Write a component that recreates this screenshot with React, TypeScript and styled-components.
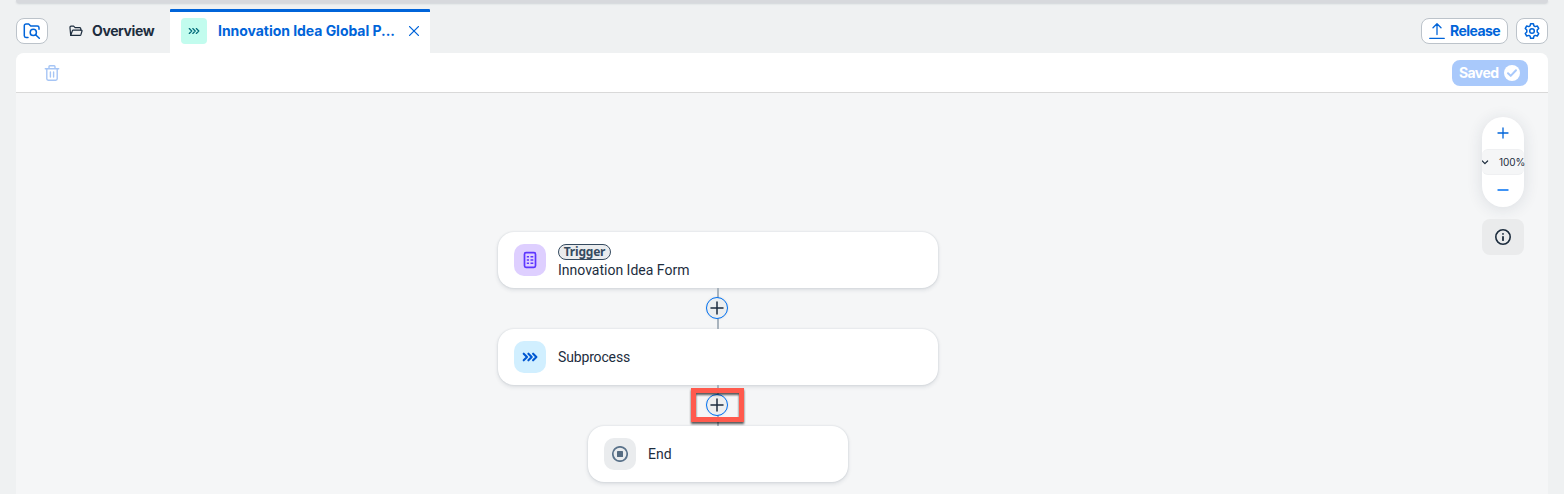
import React from "react";
import styled, { createGlobalStyle } from "styled-components";

const Global = createGlobalStyle`
  * { box-sizing: border-box; }
  html, body, #root { height: 100%; }
  body {
    margin: 0;
    overflow: hidden;
    background: #eff1f2;
    color: #1d2d3e;
    font-family: Roboto, "Noto Sans", sans-serif;
    font-size: 14px;
  }
`;

const Page = styled.div`
  height: 494px;
  padding: 0 16px;
  display: flex;
  flex-direction: column;
`;

const Shell = styled.div`
  height: 3px;
  flex: none;
  background: #d7d9dd;
  border-radius: 0 0 8px 8px;
  box-shadow: 0 1px 2px rgba(85, 95, 110, 0.2);
`;

const TabBar = styled.div`
  height: 50px;
  flex: none;
  display: flex;
  padding-top: 6px;
`;

const OutlineButton = styled.button<{ $width: number }>`
  width: ${(p) => p.$width}px;
  height: 26px;
  margin: 9px 0 0;
  padding: 0;
  display: flex;
  align-items: center;
  justify-content: center;
  gap: 5px;
  flex: none;
  border: 1px solid #bcc3ca;
  border-radius: 8px;
  background: #fff;
  color: #0064d9;
  font: inherit;
`;

const OverviewTab = styled.div`
  width: 122px;
  height: 44px;
  padding-left: 21px;
  display: flex;
  align-items: center;
  gap: 9px;
`;

const ActiveTab = styled.div`
  width: 260px;
  height: 44px;
  padding: 0 0 3px 11px;
  display: flex;
  align-items: center;
  border-top: 3px solid #0064d9;
  border-radius: 1px 1px 0 0;
  background: #fff;
  color: #0064d9;
`;

const ProcessBadge = styled.span`
  width: 26px;
  height: 26px;
  margin-right: 11px;
  display: flex;
  align-items: center;
  justify-content: center;
  border-radius: 4px;
  background: #c2fcee;
`;

const Label = styled.span<{ $width: number; $bold?: boolean; $spacing?: number }>`
  display: block;
  width: ${(p) => p.$width}px;
  font-family: ${(p) => (p.$bold ? 'Inter, "Noto Sans", sans-serif' : "inherit")};
  line-height: 18px;
  font-weight: ${(p) => (p.$bold ? 700 : 400)};
  letter-spacing: ${(p) => p.$spacing ?? 0}px;
  white-space: nowrap;
  text-align: left;
`;

const Actions = styled.div`
  margin-left: auto;
  display: flex;
  gap: 8px;
`;

const Panel = styled.main`
  flex: 1;
  display: flex;
  flex-direction: column;
  overflow: hidden;
  border-radius: 8px 8px 0 0;
  background: #f5f6f7;
`;

const Toolbar = styled.div`
  height: 40px;
  flex: none;
  padding: 0 20px 0 28px;
  display: flex;
  align-items: center;
  justify-content: space-between;
  background: #fff;
  border-bottom: 1px solid #d9d9d9;
`;

const Saved = styled.div`
  width: 76px;
  height: 26px;
  margin-top: 1px;
  padding-left: 7px;
  display: flex;
  align-items: center;
  border-radius: 8px;
  background: #a9c9fb;
  color: #fff;
`;

const Canvas = styled.section`
  flex: 1;
  display: flex;
  justify-content: space-between;
  padding: 0 24px 0 482px;
`;

const Flow = styled.div`
  width: 440px;
  padding-top: 139px;
  display: flex;
  flex-direction: column;
  align-items: center;
`;

const Card = styled.div<{ $width: number }>`
  width: ${(p) => p.$width}px;
  height: 56px;
  flex: none;
  padding: 0 16px;
  display: flex;
  align-items: center;
  gap: 12px;
  border-radius: 16px;
  background: #fff;
  box-shadow: 0 0 2px rgba(34, 53, 72, 0.16), 0 2px 4px rgba(34, 53, 72, 0.12);
`;

const CardIcon = styled.span<{ $bg: string }>`
  width: 32px;
  height: 32px;
  flex: none;
  display: flex;
  align-items: center;
  justify-content: center;
  border-radius: 10px;
  background: ${(p) => p.$bg};
`;

const Stack = styled.div`
  padding-top: 2px;
  display: flex;
  flex-direction: column;
  align-items: flex-start;
`;

const Pill = styled.span`
  width: 53px;
  height: 16px;
  margin-bottom: 1px;
  display: flex;
  align-items: center;
  justify-content: center;
  border: 1px solid #354a5f;
  border-radius: 8px;
  background: #eaecee;
  color: #354a5f;
  font-family: "Noto Sans", sans-serif;
  font-size: 12px;
  line-height: 14px;
  font-weight: 700;
  letter-spacing: -0.2px;
`;

const Connector = styled.div`
  position: relative;
  width: 54px;
  height: 41px;
  flex: none;
  display: flex;
  justify-content: center;
  background: linear-gradient(#a9b4be, #a9b4be) 26px 0 / 2px 100% no-repeat;
`;

const AddButton = styled.button`
  width: 22px;
  height: 22px;
  margin: 9px 2px 0 0;
  padding: 0;
  display: flex;
  align-items: center;
  justify-content: center;
  border: 1px solid #0070f2;
  border-radius: 50%;
  background: #edeff0;
  box-shadow: 0 0 2px rgba(34, 53, 72, 0.15);
`;

const Highlight = styled.div`
  position: absolute;
  left: 0;
  top: 3px;
  width: 53px;
  height: 34px;
  border: 5px solid #ff5a4d;
  filter: drop-shadow(0 2px 1px rgba(0, 0, 0, 0.65));
`;

const Controls = styled.aside`
  width: 42px;
  padding-top: 24px;
  display: flex;
  flex-direction: column;
  gap: 12px;
`;

const ZoomBox = styled.div`
  height: 90px;
  display: flex;
  flex-direction: column;
  border-radius: 21px;
  background: #fff;
  box-shadow: 0 2px 16px rgba(34, 53, 72, 0.12);
`;

const ZoomButton = styled.button<{ $height: number }>`
  height: ${(p) => p.$height}px;
  padding: 0;
  display: flex;
  align-items: center;
  justify-content: center;
  border: 0;
  background: none;
`;

const ZoomLevel = styled.div`
  height: 26px;
  flex: none;
  display: flex;
  align-items: center;
  gap: 10px;
  border: 1px solid #eff0f2;
  border-width: 1px 0;
  border-radius: 6px;
  background: #f5f6f7;
  font-family: Inter, Arial, sans-serif;
  font-size: 10px;
  letter-spacing: -0.1px;
`;

const InfoButton = styled.button`
  height: 36px;
  padding: 0;
  display: flex;
  align-items: center;
  justify-content: center;
  border: 0;
  border-radius: 8px;
  background: #eaebec;
`;

const Svg = styled.svg`
  display: block;
  flex: none;
  fill: none;
  stroke-linecap: round;
  stroke-linejoin: round;
`;

const Chevrons = ({ color, size, width }: { color: string; size: number; width: number }) => (
  <Svg width={size} height={size} viewBox="0 0 16 16" stroke={color} strokeWidth={width}>
    <path d="M1.7 4.7 5 8l-3.3 3.3M6.4 4.7 9.7 8l-3.3 3.3M11.1 4.7 14.4 8l-3.3 3.3" />
  </Svg>
);

const Plus = ({ color, size, width }: { color: string; size: number; width: number }) => (
  <Svg width={size} height={size} viewBox={`0 0 ${size} ${size}`} stroke={color} strokeWidth={width}>
    <path d={`M${size / 2} 1v${size - 2}M1 ${size / 2}h${size - 2}`} />
  </Svg>
);

export default function App() {
  return (
    <>
      <Global />
      <Page>
        <Shell />
        <TabBar>
          <OutlineButton $width={32} aria-label="Search folder">
            <Svg width="18" height="18" viewBox="0 0 18 18" stroke="#0064d9" strokeWidth="1.5">
              <path d="M5 15.500H3A1.700 1.700 0 0 1 1.300 13.800V3.700A1.700 1.700 0 0 1 3 2h2.700l2 2h6.600A1.700 1.700 0 0 1 16 5.700v1.600" />
              <circle cx="10.300" cy="10.400" r="3.100" />
              <path d="m12.600 12.700 3.700 3.500" />
            </Svg>
          </OutlineButton>
          <OverviewTab>
            <Svg width="14" height="12" viewBox="0 0 14 12" stroke="#1d2d3e" strokeWidth="1.200">
              <path d="M1.700 10.300 1 3V2.200a1 1 0 0 1 1-1h2.600l1.500 1.500h4.700a1 1 0 0 1 1 1v1.400" />
              <path d="M1.700 10.300 3.400 5.700a.9.900 0 0 1 .8-.5h8.200a.6.600 0 0 1 .6.800l-1.100 3.700a.9.900 0 0 1-.9.600Z" />
            </Svg>
            <Label $width={64} $bold $spacing={-0.4}>Overview</Label>
          </OverviewTab>
          <ActiveTab>
            <ProcessBadge>
              <Chevrons color="#046c7a" size={12} width={1.6} />
            </ProcessBadge>
            <Label $width={191} $bold $spacing={-0.04}>Innovation Idea Global P...</Label>
            <Svg width="10" height="10" viewBox="0 0 10 10" stroke="#0064d9" strokeWidth="1.300">
              <path d="m.6.600 8.800 8.800M9.400.600.6 9.400" />
            </Svg>
          </ActiveTab>
          <Actions>
            <OutlineButton $width={87}>
              <Svg width="16" height="16" viewBox="0 0 16 16" stroke="#0064d9" strokeWidth="1.300">
                <path d="M8 11.500V1M4 4.700 8 .8l4 3.900M.7 15.300h14.600" />
              </Svg>
              <Label $width={50} $bold $spacing={-0.55}>Release</Label>
            </OutlineButton>
            <OutlineButton $width={32} aria-label="Settings">
              <Svg width="16" height="16" viewBox="0 0 16 16" stroke="#0064d9" strokeWidth="1.500">
                <path d="M6.600.800h2.800l.5 2 1.300.8 2.100-.6 1.400 2.400L13.200 7v2l1.500 1.600-1.400 2.400-2.100-.6-1.300.8-.5 2H6.600l-.5-2-1.300-.8-2.100.6-1.400-2.400L2.800 9V7L1.300 5.400 2.700 3l2.100.6 1.300-.8Z" />
                <circle cx="8" cy="8" r="2.300" />
              </Svg>
            </OutlineButton>
          </Actions>
        </TabBar>
        <Panel>
          <Toolbar>
            <Svg width="16" height="16" viewBox="0 0 16 16" stroke="#a6c5f5" strokeWidth="1.400">
              <path d="M1.300 3.700h13.400M5 3.500V1.700A.9.900 0 0 1 5.900.800h4.200a.9.900 0 0 1 .9.900v1.800M2.800 3.700v10.100c0 .9.500 1.400 1.400 1.400h7.600c.9 0 1.400-.5 1.400-1.400V3.700M6.400 7v5M9.600 7v5" />
            </Svg>
            <Saved>
              <Label $width={45} $bold $spacing={-0.6}>Saved</Label>
              <Svg width="16" height="16" viewBox="0 0 16 16" stroke="#a9c9fb" strokeWidth="2">
                <circle cx="8" cy="8" r="8" fill="#fff" stroke="none" />
                <path d="m4 8.300 2.700 2.600L12 5.300" />
              </Svg>
            </Saved>
          </Toolbar>
          <Canvas>
            <Flow>
              <Card $width={440}>
                <CardIcon $bg="#decfff">
                  <Svg width="14" height="18" viewBox="0 0 14 18" stroke="#5d36ff" strokeWidth="1.700">
                    <rect x="1.500" y="1.700" width="11" height="14.600" rx="1.500" />
                    <path d="M4.500 5.800h.8M8.200 5.800h1.400M4.500 9h.8M8.200 9h1.400M4.500 12.200h.8M8.200 12.200h1.400" strokeLinecap="square" strokeWidth="1.400" />
                  </Svg>
                </CardIcon>
                <Stack>
                  <Pill>Trigger</Pill>
                  <Label $width={140} $spacing={0}>Innovation Idea Form</Label>
                </Stack>
              </Card>
              <Connector>
                <AddButton aria-label="Add step"><Plus color="#1d2d3e" size={14} width={1.5} /></AddButton>
              </Connector>
              <Card $width={440}>
                <CardIcon $bg="#d1efff"><Chevrons color="#0057d2" size={16} width={2.1} /></CardIcon>
                <Label $width={90} $spacing={-0.15}>Subprocess</Label>
              </Card>
              <Connector>
                <AddButton aria-label="Add step"><Plus color="#1d2d3e" size={14} width={1.5} /></AddButton>
                <Highlight />
              </Connector>
              <Card $width={260}>
                <CardIcon $bg="#eaecee">
                  <Svg width="16" height="16" viewBox="0 0 16 16" stroke="#5b738b" strokeWidth="1.700">
                    <circle cx="8" cy="8" r="7.200" />
                    <rect x="5" y="5" width="6" height="6" rx=".6" fill="#556b81" stroke="none" />
                  </Svg>
                </CardIcon>
                <Label $width={40}>End</Label>
              </Card>
            </Flow>
            <Controls>
              <ZoomBox>
                <ZoomButton $height={32} aria-label="Zoom in"><Plus color="#0064d9" size={12} width={1.3} /></ZoomButton>
                <ZoomLevel>
                  <Svg width="7" height="5" viewBox="0 0 7 5" stroke="#1d2d3e" strokeWidth="1.200"><path d="M.300 1 2.900 3.700 5.600 1" /></Svg>
                  <span>100%</span>
                </ZoomLevel>
                <ZoomButton $height={30} aria-label="Zoom out">
                  <Svg width="12" height="2" viewBox="0 0 12 2" stroke="#0070f2" strokeWidth="1.400"><path d="M1 1h10" /></Svg>
                </ZoomButton>
              </ZoomBox>
              <InfoButton aria-label="Information">
                <Svg width="16" height="16" viewBox="0 0 16 16" stroke="#1d2d3e" strokeWidth="1.600">
                  <circle cx="8" cy="8" r="7.200" />
                  <path d="M8 7.800v3.400M8 4.800v.1" strokeWidth="1.800" />
                </Svg>
              </InfoButton>
            </Controls>
          </Canvas>
        </Panel>
      </Page>
    </>
  );
}
